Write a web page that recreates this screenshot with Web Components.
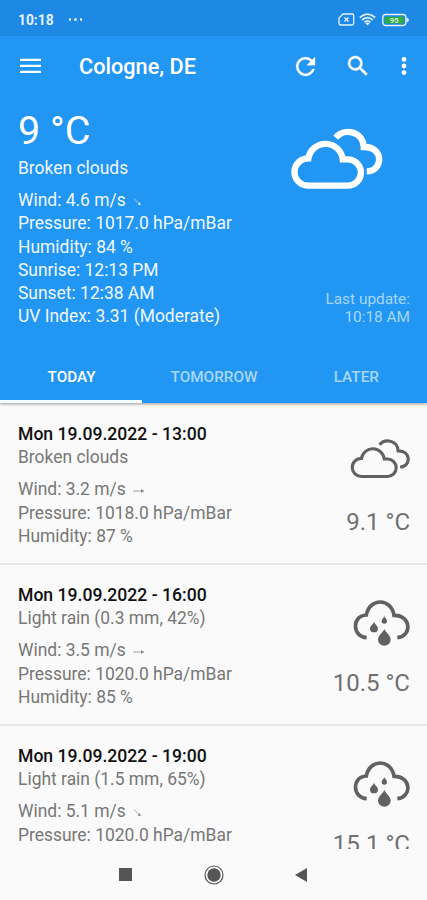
<!DOCTYPE html>
<html lang="en">
<head>
<meta charset="utf-8">
<title>Weather</title>
<style>
html,body{margin:0;height:900px;overflow:hidden;background:#fafafa}
body{font-family:Roboto,"Liberation Sans",sans-serif}
</style>
</head>
<body>
<weather-app></weather-app>
<script>
const define = (name, html) => {
  const t = document.createElement('template');
  t.innerHTML = html;
  customElements.define(name, class extends HTMLElement {
    constructor() {
      super();
      this.attachShadow({mode: 'open'}).append(t.content.cloneNode(true));
    }
  });
};

define('icon-clouds', `
<style>:host{display:block;width:60.5px;height:39.7px}svg{display:block;width:100%;height:100%;overflow:visible}
path{fill:none;stroke:currentColor;stroke-width:var(--stroke,14)}</style>
<svg viewBox="62 57 274 180"><path d="M112 227A41 41 0 0 1 114 145A52 52 0 0 1 217 148H232A39.500 39.500 0 0 1 232 227Z"/><path d="M196 83C222 52 278 64 280 111C340 108 340 184 289 184"/></svg>`);

define('icon-rain', `
<style>:host{display:block;width:57px;height:46px}svg{display:block;width:100%;height:100%;overflow:visible}
.c{fill:none;stroke:currentColor;stroke-width:11}.d{fill:currentColor}</style>
<svg viewBox="100 60 171 138"><path class="c" d="M141 173C98 172 95 107 140 105C149 53 215 53 223 106C274 104 279 168 233 173"/>
<g class="d"><path d="M194 147C190 157 175 166 175 179A19 18 0 0 0 213 179C213 166 198 157 194 147Z"/>
<path d="M163 126C160 133 151 138 151 146A12 11 0 0 0 175 146C175 138 166 133 163 126Z"/>
<path d="M194 109C192 114 186 118 186 123A8 8 0 0 0 202 123C202 118 196 114 194 109Z"/></g></svg>`);

define('wind-arrow', `
<style>:host{display:inline-block;width:12px;height:8px;margin-left:3px;opacity:.85}:host([down]){transform:translate(-1.500px,0) rotate(45deg) scale(.85)}svg{display:block}</style>
<svg width="12" height="8" viewBox="0 0 12 8"><path d="M0 4H9" stroke="currentColor" stroke-width=".8" fill="none"/><path d="M8 2L11.500 4L8 6Z" fill="currentColor"/></svg>`);

define('status-bar', `
<style>:host{display:flex;align-items:center;height:36px;padding:3px 18px 0 18px;box-sizing:border-box;background:#1e88e5;color:#e3f2fd;font-size:13.800px;font-weight:700}
.dots{display:flex;gap:3px;margin-left:15px;flex:1}.dots i{width:2.600px;height:2.600px;border-radius:2px;background:currentColor}
svg{display:block}.w{margin:0 6px 0 4px}
text{font:700 8px Roboto,sans-serif}</style>
<span>10:18</span><div class="dots"><i></i><i></i><i></i></div>
<svg width="17" height="13" viewBox="0 0 17 13" fill="none" stroke="currentColor" stroke-width="1.300"><path d="M5 1H14Q15.700 1 15.700 2.700V10.300Q15.700 12 14 12H2.700Q1 12 1 10.300V5Z"/><path d="M6.500 4.500L10.500 8.500M10.500 4.500L6.500 8.500"/></svg>
<svg class="w" width="17" height="13" viewBox="0 0 17 13" fill="none" stroke="currentColor" stroke-width="1.700"><path d="M.8 4.500Q8.500-2.200 16.200 4.500M3.200 7Q8.500 2.200 13.800 7M5.500 9.300Q8.500 6.600 11.500 9.300"/><path d="M6.500 10.200L8.500 12.500L10.500 10.200Q8.500 8.800 6.500 10.200Z" fill="currentColor" stroke="none"/></svg>
<svg width="27" height="14" viewBox="0 0 28 14"><rect x=".8" y="1.300" width="24" height="11.400" rx="3" fill="none" stroke="currentColor" stroke-width="1.400"/><path d="M25.500 4.500Q28 5.500 28 7Q28 8.500 25.500 9.500Z" fill="currentColor"/><rect x="3" y="3.500" width="19.500" height="7" rx="1" fill="#2eae3a"/><text x="12.700" y="9.900" text-anchor="middle" fill="#dff5df">95</text></svg>`);

define('app-bar', `
<style>:host{display:flex;align-items:center;height:60px;padding:0 20px 0 20px;color:#fff}
h1{font-size:21.700px;font-weight:500;margin:0 0 0 38px;flex:1;line-height:26px;padding-top:2px}svg{display:block}
.r{margin-right:33px}.s{margin-right:34px}</style>
<svg width="21" height="16" viewBox="0 0 21 16" stroke="currentColor" stroke-width="2.300"><path d="M0 1.800H21M0 7.800H21M0 13.800H21"/></svg>
<h1><slot></slot></h1>
<svg class="r" width="19" height="19" viewBox="4 4 16 16" fill="currentColor" stroke="currentColor" stroke-width=".2" overflow="visible"><path d="M17.650 6.350A7.960 7.960 0 0 0 12 4a8 8 0 1 0 7.730 10h-2.080A6 6 0 1 1 12 6c1.660 0 3.140.69 4.220 1.780L13 11h7V4z"/></svg>
<svg class="s" width="19.500" height="19.500" viewBox="3 3 17.500 17.500" fill="currentColor" stroke="currentColor" stroke-width=".4" overflow="visible"><path d="M15.500 14h-.79l-.28-.27A6.470 6.470 0 0 0 16 9.500 6.500 6.500 0 1 0 9.500 16c1.610 0 3.090-.59 4.230-1.570l.27.280v.79l5 4.990L20.490 19zm-6 0C7.010 14 5 11.990 5 9.500S7.010 5 9.500 5 14 7.010 14 9.500 11.990 14 9.500 14z"/></svg>
<svg width="6" height="20" viewBox="0 0 6 20" fill="currentColor"><circle cx="3" cy="3.400" r="2.400"/><circle cx="3" cy="10" r="2.400"/><circle cx="3" cy="16.600" r="2.400"/></svg>`);

define('current-weather', `
<style>:host{display:flex;justify-content:space-between;height:255px;padding:0 17px 0 18px;color:#f0f8ff;font-size:17.450px;line-height:23.300px}
.t{font-size:39.500px;line-height:46px;padding-top:12px;color:#fff}.c{margin-top:3px;height:32px}
.side{display:flex;flex-direction:column;align-items:flex-end}
icon-clouds{width:91.500px;height:60px;margin:33px 28px 0 0;color:#fff;--stroke:19}
.u{margin-top:101px;text-align:right;font-size:15.400px;line-height:18px;color:#a8d7fb}</style>
<div><div class="t">9 °C</div><div class="c">Broken clouds</div>
<div>Wind: 4.6 m/s <wind-arrow down></wind-arrow></div><div>Pressure: 1017.0 hPa/mBar</div><div>Humidity: 84 %</div><div>Sunrise: 12:13 PM</div><div>Sunset: 12:38 AM</div><div>UV Index: 3.31 (Moderate)</div></div>
<div class="side"><icon-clouds></icon-clouds><div class="u">Last update:<br>10:18 AM</div></div>`);

define('tab-bar', `
<style>:host{display:grid;grid-template-columns:repeat(3,1fr);height:52px;font-size:15.300px;font-weight:500;color:#a8d7fb}
div{display:flex;align-items:center;justify-content:center;padding:3px 0 0 1px;border-bottom:3px solid transparent}
.on{color:#fff;border-color:#f6fbff}</style>
<div class="on">TODAY</div><div>TOMORROW</div><div>LATER</div>`);

define('forecast-item', `
<style>:host{display:flex;justify-content:space-between;box-sizing:border-box;height:161px;border-bottom:2px solid #e8e8e8;padding:19px 17px 0 18px;font-size:17.450px;line-height:23.300px;color:#777}
.d{color:#111;font-weight:500;font-size:17.600px}.s{margin-bottom:8.700px}
.side{display:flex;flex-direction:column;align-items:flex-end;color:#616161}.i{height:59px;padding-top:16px;box-sizing:border-box}
.t{font-size:24px;line-height:28px;margin-top:26px;color:#707070}</style>
<div><div class="d"><slot name="date"></slot></div><div class="s"><slot name="sky"></slot></div>
<div><slot name="wind"></slot></div><div><slot name="pressure"></slot></div><div><slot name="humidity"></slot></div></div>
<div class="side"><div class="i"><slot name="icon"></slot></div><div class="t"><slot name="temp"></slot></div></div>`);

define('nav-bar', `
<style>:host{display:flex;justify-content:space-between;align-items:center;height:51px;padding:0 120px 0 119px;box-sizing:border-box;background:#fafafa;color:#555}svg{display:block}</style>
<svg width="13" height="13"><rect width="13" height="13" fill="currentColor"/></svg>
<svg width="20" height="20"><circle cx="10" cy="10" r="9" fill="none" stroke="currentColor" stroke-width="1.200"/><circle cx="10" cy="10" r="6.700" fill="currentColor"/></svg>
<svg width="12" height="14"><path d="M0 7L12 0V14Z" fill="currentColor"/></svg>`);

define('weather-app', `
<style>:host{display:flex;flex-direction:column;height:900px;background:#fafafa}
header{background:#2196f3;height:403px;flex:none;box-shadow:0 1px 3px #0006;z-index:1}
main{flex:1;overflow:hidden;min-height:0;padding-top:1px}nav-bar{flex:none}</style>
<header><status-bar></status-bar><app-bar>Cologne, DE</app-bar><current-weather></current-weather><tab-bar></tab-bar></header>
<main>
<forecast-item><span slot="date">Mon 19.09.2022 - 13:00</span><span slot="sky">Broken clouds</span><span slot="wind">Wind: 3.2 m/s <wind-arrow></wind-arrow></span><span slot="pressure">Pressure: 1018.0 hPa/mBar</span><span slot="humidity">Humidity: 87 %</span><icon-clouds slot="icon"></icon-clouds><span slot="temp">9.1 °C</span></forecast-item>
<forecast-item><span slot="date">Mon 19.09.2022 - 16:00</span><span slot="sky">Light rain (0.3 mm, 42%)</span><span slot="wind">Wind: 3.5 m/s <wind-arrow></wind-arrow></span><span slot="pressure">Pressure: 1020.0 hPa/mBar</span><span slot="humidity">Humidity: 85 %</span><icon-rain slot="icon"></icon-rain><span slot="temp">10.5 °C</span></forecast-item>
<forecast-item><span slot="date">Mon 19.09.2022 - 19:00</span><span slot="sky">Light rain (1.5 mm, 65%)</span><span slot="wind">Wind: 5.1 m/s <wind-arrow down></wind-arrow></span><span slot="pressure">Pressure: 1020.0 hPa/mBar</span><icon-rain slot="icon"></icon-rain><span slot="temp">15.1 °C</span></forecast-item>
</main><nav-bar></nav-bar>`);
</script>
</body>
</html>
